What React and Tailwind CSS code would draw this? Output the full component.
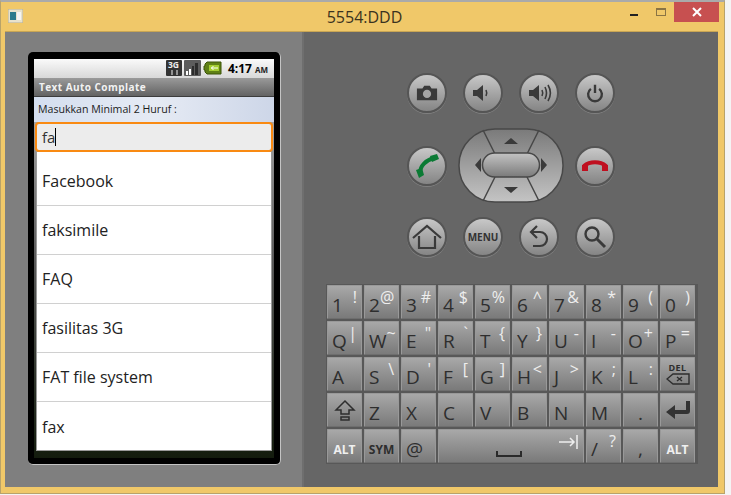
import React from 'react';

const SUGGESTIONS = ['faksimile', 'FAQ', 'fasilitas 3G', 'FAT file system'];

const KEYS = [
  ['1', '!'], ['2', '@'], ['3', '#'], ['4', '$'], ['5', '%'], ['6', '^'], ['7', '&'], ['8', '*'], ['9', '('], ['0', ')'],
  ['Q', '|'], ['W', '~'], ['E', '"'], ['R', '`'], ['T', '{'], ['Y', '}'], ['U', '-'], ['I', '-'], ['O', '+'], ['P', '='],
  ['A', ''], ['S', '\\'], ['D', "'"], ['F', '['], ['G', ']'], ['H', '<'], ['J', '>'], ['K', ';'], ['L', ':'],
];

const INK = '#3a3a3a';

// --- Keypad drawings ---
const CameraIcon = () => (
  <svg width="22" height="22" viewBox="0 0 24 24">
    <path d="M1 7h6l2-3h6l2 3h6v13H1z" fill={INK} />
    <circle cx="12" cy="13" r="4.5" fill="#a5a5a5" />
  </svg>
);

const VolumeIcon = ({ loud }) => (
  <svg width="26" height="24" viewBox="0 0 26 24" fill="none">
    <path d="M3 9h4l6-5v16l-6-5H3z" fill={INK} />
    <path d="M16 9c1 2 1 4 0 6" stroke={INK} strokeWidth="1.6" />
    {loud && <path d="M19 6c2 4 2 8 0 12M22 4c3 5 3 11 0 16" stroke={INK} strokeWidth="1.6" />}
  </svg>
);

const PowerIcon = () => (
  <svg width="22" height="22" viewBox="0 0 24 24" fill="none" stroke={INK} strokeWidth="2.6">
    <path d="M7.5 7.5a7.5 7.5 0 1 0 9 0" />
    <path d="M12 3v9" />
  </svg>
);

const CallIcon = () => (
  <svg width="26" height="26" viewBox="0 0 26 26" fill="none">
    <path d="M6 20C6 13 12 7 20 5" stroke="#0b7a34" strokeWidth="4" />
    <path d="M2 17l6-2 2 7-5 3zM16 3l7-2 2 5-7 3z" fill="#0b7a34" />
  </svg>
);

const EndIcon = () => (
  <svg width="28" height="16" viewBox="0 0 28 16" fill="none">
    <path d="M3 8c6-5 16-5 22 0" stroke="#bf0f1f" strokeWidth="4" />
    <path d="M1 7l6-2v8H1zM21 5l6 2v6h-6z" fill="#bf0f1f" />
  </svg>
);

const HomeIcon = () => (
  <svg width="30" height="28" viewBox="0 0 30 28" fill="none" stroke={INK} strokeWidth="2.2">
    <path d="M1 15L15 3l14 12" />
    <path d="M7 13v12h16V13" />
  </svg>
);

const BackIcon = () => (
  <svg width="24" height="26" viewBox="0 0 24 26" fill="none" stroke={INK} strokeWidth="2.2">
    <path d="M10 2L4 8l6 6" />
    <path d="M4 8h9a6.5 6.5 0 0 1 0 14H6" />
  </svg>
);

const SearchIcon = () => (
  <svg width="26" height="26" viewBox="0 0 26 26" fill="none" stroke={INK}>
    <circle cx="10" cy="10" r="6.5" strokeWidth="2.4" />
    <path d="M15 15l8 8" strokeWidth="3" />
  </svg>
);

const RoundButton = ({ children }) => (
  <div className="w-10 h-10 rounded-full border-2 border-[#555] bg-linear-to-b from-[#c8c8c8] to-[#858585] shadow-[0_1px_0_0_#808080] flex items-center justify-center">
    {children}
  </div>
);

const DPad = () => (
  <svg width="106" height="75" viewBox="0 0 106 75">
    <defs>
      <linearGradient id="pad" x1="0" y1="0" x2="0" y2="1">
        <stop offset="0" stopColor="#7a7a7a" />
        <stop offset="1" stopColor="#c4c4c4" />
      </linearGradient>
      <linearGradient id="pill" x1="0" y1="0" x2="0" y2="1">
        <stop offset="0" stopColor="#c4c4c4" />
        <stop offset="1" stopColor="#7a7a7a" />
      </linearGradient>
    </defs>
    <rect x="1" y="1" width="104" height="73" rx="36" fill="url(#pad)" stroke="#484848" strokeWidth="1.5" />
    <path d="M25 2l12 24M81 2L69 26M37 49L25 73M69 49l12 24" stroke="#484848" strokeWidth="1.5" />
    <rect x="24.5" y="25" width="57" height="24" rx="12" fill="url(#pill)" stroke="#484848" strokeWidth="1.5" />
    <path d="M53 10l7 6H46zM53 65l7-6H46zM17 37l6-7v14zM89 37l-6-7v14z" fill="#3a3a3a" />
  </svg>
);

// --- Keyboard ---
const Key = ({ main, alt, className = '' }) => (
  <div className={`rounded-[1px] border border-[#999] border-b-[#6e6e6e] bg-linear-to-b from-[#a8a8a8] to-[#7a7a7a] flex justify-between pl-1 pr-[4px] ${className}`}>
    <span className="self-end text-[19px] leading-[26px] text-[#2e2e2e]">{main}</span>
    <span className="self-start text-[16px] leading-[22px] text-[#eee]">{alt}</span>
  </div>
);

const IconKey = ({ children }) => (
  <div className="rounded-[1px] border border-[#999] border-b-[#6e6e6e] bg-linear-to-b from-[#a8a8a8] to-[#7a7a7a] flex flex-col items-center justify-center">
    {children}
  </div>
);

const Keyboard = () => (
  <div className="ml-[22px] mt-[27px] w-[372px] p-px bg-[#585858] grid grid-cols-[repeat(10,35px)] auto-rows-[34px] gap-[2px]">
    {KEYS.map(([main, alt]) => <Key key={main} main={main} alt={alt} />)}
    <IconKey>
      <span className="text-[9px] leading-[10px] font-bold tracking-wider text-[#2e2e2e]">DEL</span>
      <svg width="24" height="12" viewBox="0 0 24 12" fill="none" stroke="#2e2e2e" strokeWidth="1.4">
        <path d="M7 1h16v10H7L1 6z" />
        <path d="M11 4l5 4M16 4l-5 4" />
      </svg>
    </IconKey>
    <IconKey>
      <svg width="22" height="24" viewBox="0 0 22 24" fill="none" stroke="#2e2e2e" strokeWidth="1.5">
        <path d="M11 3L2 12h5v4h8v-4h5z" />
        <path d="M7 19h8v3H7z" />
      </svg>
    </IconKey>
    {['Z', 'X', 'C', 'V', 'B', 'N', 'M'].map((k) => <Key key={k} main={k} alt="" />)}
    <Key main="." alt="" className="justify-center!" />
    <IconKey>
      <svg width="26" height="20" viewBox="0 0 26 20" fill="#333">
        <path d="M21 1h4v10a3 3 0 0 1-3 3H10v5L1 12l9-7v5h11z" />
      </svg>
    </IconKey>
    <IconKey><span className="text-[12px] font-bold text-[#f0f0f0] mt-2">ALT</span></IconKey>
    <IconKey><span className="text-[12px] font-bold text-[#2e2e2e] mt-2">SYM</span></IconKey>
    <Key main="@" alt="" />
    <div className="col-span-4 rounded-[1px] border border-[#999] border-b-[#6e6e6e] bg-linear-to-b from-[#a8a8a8] to-[#7a7a7a] flex flex-col items-end pr-[5px] pt-[5px]">
      <svg width="19" height="14" viewBox="0 0 19 14" fill="none" stroke="#eee" strokeWidth="1.5">
        <path d="M0 7h15M11 3l4 4-4 4M18 0v14" />
      </svg>
      <svg className="self-center mt-[1px]" width="26" height="8" viewBox="0 0 26 8" fill="none" stroke="#2a2a2a" strokeWidth="2">
        <path d="M1 1v5h24V1" />
      </svg>
    </div>
    <Key main="/" alt="?" />
    <Key main="," alt="" className="justify-center!" />
    <IconKey><span className="text-[12px] font-bold text-[#f0f0f0] mt-2">ALT</span></IconKey>
  </div>
);

// --- Phone screen ---
const StatusBar = () => (
  <div className="h-[19px] bg-linear-to-b from-[#fafafa] to-[#d8d8d8] flex items-center justify-end pr-[6px]">
    <svg width="56" height="17" viewBox="0 0 56 17" className="mr-[6px]">
      <rect x="0" y="0" width="16" height="16" rx="1" fill="#333" />
      <text x="2" y="8" fontSize="8.5" fontWeight="700" fontFamily="Open Sans" fill="#eee">3G</text>
      <path d="M6 10v5M11 10v5" stroke="#aaa" strokeWidth="1.6" />
      <rect x="18" y="0" width="17" height="16" rx="1" fill="#5c5c5c" />
      <path d="M20 11h2v4h-2zM23 9h2v6h-2z" fill="#fff" />
      <path d="M26 6h2v9h-2zM29 3h3v12h-3z" fill="#2c2c2c" />
      <path d="M41 2h14v12H41l-2-2v-2h-1V6h1V4z" fill="#5f8016" stroke="#3c5409" />
      <path d="M43 5h10v6H43z" fill="#a4cc32" />
      <path d="M45 8h7M47.5 6l-2 2 2 2" stroke="#fff" fill="none" />
    </svg>
    <span className="text-[12px] font-bold text-black">4:17</span>
    <span className="text-[8px] font-bold text-[#222] ml-[3px] mt-[2px]">AM</span>
  </div>
);

const Screen = () => (
  <div className="h-[399px] flex flex-col bg-linear-to-b from-[#c8c8c8] via-[#5a5a5a] to-[#141c0e]">
    <StatusBar />
    <div className="h-[19px] pl-[5px] bg-linear-to-b from-[#9a9a9a] to-[#636363] border-b border-[#3c3c3c] flex items-center">
      <span className="text-[10px] font-bold tracking-[0.45px] text-[#f2f2f2]">Text Auto Complate</span>
    </div>
    <div className="h-[25px] pl-[4px] bg-linear-to-r from-[#d4deef] via-[#e6ebf4] to-[#cdd6e8] flex items-center">
      <span className="text-[10.6px] text-[#1c1c1c]">Masukkan Minimal 2 Huruf :</span>
    </div>
    <div className="mx-px h-[30px] rounded-[4px] border-2 border-[#f98a12] bg-[#ececec] pl-[5px] flex items-center">
      <span className="text-[15px] text-[#333]">fa</span>
      <span className="w-px h-[18px] bg-black" />
    </div>
    <div className="mx-[2px] h-[299px] bg-white border-x border-b border-[#9a9a9a] text-[16px] text-[#222]">
      <div className="h-[54px] pt-[5px] pl-[5px] border-b border-[#d0d0d0] flex items-center">Facebook</div>
      {SUGGESTIONS.map((item) => (
        <div key={item} className="h-[49px] pl-[5px] border-b border-[#d0d0d0] flex items-center">{item}</div>
      ))}
      <div className="h-[49px] pl-[5px] flex items-center">fax</div>
    </div>
  </div>
);

export default function App() {
  return (
    <div className="w-[731px] h-[495px] bg-[#f4f4f4] overflow-hidden font-['Open_Sans',sans-serif]">
      <div className="w-[725px] h-[494px] bg-[#f0c869] border-t-2 border-x border-b border-[#b8a36a] border-t-[#aaa] flex flex-col">
        {/* Title bar */}
        <div className="h-[29px] flex">
          <div className="w-[150px] pl-[7px] pt-[7px]">
            <svg width="15" height="14" viewBox="0 0 15 14">
              <rect x="0" y="0" width="15" height="14" fill="#e8e2cc" stroke="#b5ad90" />
              <rect x="2" y="3" width="6" height="8" fill="#2c7a8c" />
              <rect x="9" y="3" width="4" height="8" fill="#f4f4f4" />
            </svg>
          </div>
          <div className="flex-1 pl-[4px] flex items-center justify-center text-[16px] text-[#3a3220]">5554:DDD</div>
          <div className="w-[150px] flex items-start justify-end pr-[5px]">
            <span className="w-[8px] h-[2px] mt-[12px] bg-[#222]" />
            <span className="w-[10px] h-[8px] mt-[6px] ml-[18px] border border-t-2 border-[#8a7444]" />
            <span className="w-[45px] h-[20px] ml-[8px] bg-[#c75050] flex items-center justify-center">
              <svg width="10" height="10" viewBox="0 0 10 10" stroke="#fff" strokeWidth="2">
                <path d="M1 1l8 8M9 1L1 9" />
              </svg>
            </span>
          </div>
        </div>

        {/* Emulator skin */}
        <div className="ml-[4px] mr-[6px] h-[456px] flex border-t border-[#c9a654]">
          <div className="w-[299px] bg-[#7f7f7f] pl-[23px] pt-[20px] border-r-2 border-[#6f6f6f]">
            <div className="w-[253px] h-[413px] rounded-[5px] bg-black px-[6px] pt-[7px] border-r border-b border-[#c4c4c4]">
              <Screen />
            </div>
          </div>
          <div className="flex-1 bg-[#666]">
            <div className="ml-[103px] mt-[41px] w-[208px] flex flex-col">
              <div className="flex justify-between">
                <RoundButton><CameraIcon /></RoundButton>
                <RoundButton><VolumeIcon /></RoundButton>
                <RoundButton><VolumeIcon loud /></RoundButton>
                <RoundButton><PowerIcon /></RoundButton>
              </div>
              <div className="mt-[15px] flex items-center justify-between">
                <RoundButton><CallIcon /></RoundButton>
                <DPad />
                <RoundButton><EndIcon /></RoundButton>
              </div>
              <div className="mt-[14px] flex justify-between">
                <RoundButton><HomeIcon /></RoundButton>
                <RoundButton><span className="text-[10px] font-bold text-[#333]">MENU</span></RoundButton>
                <RoundButton><BackIcon /></RoundButton>
                <RoundButton><SearchIcon /></RoundButton>
              </div>
            </div>
            <Keyboard />
          </div>
        </div>
      </div>
    </div>
  );
}
